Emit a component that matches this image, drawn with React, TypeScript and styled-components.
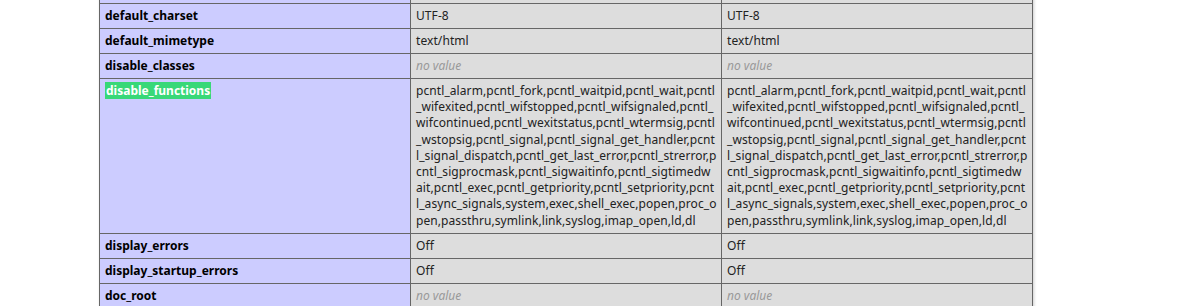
import styled, { createGlobalStyle } from 'styled-components'

const GlobalStyle = createGlobalStyle`
  html, body {
    margin: 0;
    padding: 0;
    background: #fff;
    color: #222;
    font-family: "Noto Sans", "Open Sans", sans-serif;
  }
`

type Directive = {
  name: string;
  local: string[] | null;
  found?: boolean;
  hidden?: boolean;
}

const fnLines = [
  'pcntl_alarm,pcntl_fork,pcntl_waitpid,pcntl_wait,pcntl',
  '_wifexited,pcntl_wifstopped,pcntl_wifsignaled,pcntl_',
  'wifcontinued,pcntl_wexitstatus,pcntl_wtermsig,pcntl',
  '_wstopsig,pcntl_signal,pcntl_signal_get_handler,pcnt',
  'l_signal_dispatch,pcntl_get_last_error,pcntl_strerror,p',
  'cntl_sigprocmask,pcntl_sigwaitinfo,pcntl_sigtimedw',
  'ait,pcntl_exec,pcntl_getpriority,pcntl_setpriority,pcnt',
  'l_async_signals,system,exec,shell_exec,popen,proc_o',
  'pen,passthru,symlink,link,syslog,imap_open,ld,dl',
]

// first row is scrolled out of view, only its bottom border shows
const directives: Directive[] = [
  { name: 'browscap', local: null, hidden: true },
  { name: 'default_charset', local: ['UTF-8'] },
  { name: 'default_mimetype', local: ['text/html'] },
  { name: 'disable_classes', local: null },
  { name: 'disable_functions', local: fnLines, found: true },
  { name: 'display_errors', local: ['Off'] },
  { name: 'display_startup_errors', local: ['Off'] },
  { name: 'doc_root', local: null },
  { name: 'docref_ext', local: null, hidden: true },
]

function Value({ lines }: { lines: string[] | null }) {
  if (!lines) return <NoValue>no value</NoValue>
  return (
    <>
      {lines.map((l, i) => (
        <span key={i}>
          {l}
          {i < lines.length - 1 && <br />}
        </span>
      ))}
    </>
  )
}

export default function App() {
  return (
    <Page>
      <GlobalStyle />
      <Table>
        <tbody>
          {directives.map(d => {
            const multi = !!d.local && d.local.length > 1
            return (
              <tr key={d.name}>
                <NameCell>{d.hidden ? '\u00a0' : d.found ? <Found>{d.name}</Found> : d.name}</NameCell>
                <ValueCell $multi={multi}>{d.hidden ? '\u00a0' : <Value lines={d.local} />}</ValueCell>
                <ValueCell $multi={multi}>{d.hidden ? '\u00a0' : <Value lines={d.local} />}</ValueCell>
              </tr>
            )
          })}
        </tbody>
      </Table>
    </Page>
  )
}

const Page = styled.div`
  height: 306px;
  overflow: hidden;
  padding-left: 99px;
`

const Table = styled.table`
  border-collapse: collapse;
  border: 0;
  width: 934px;
  margin-top: -22px;
  box-shadow: 1px 2px 3px #ccc;
`

const Cell = styled.td`
  border: 1px solid #666;
  font-size: 12px;
  line-height: 16px;
  vertical-align: baseline;
  padding: 4px 5px;
  text-align: left;
  white-space: nowrap;
`

const NameCell = styled(Cell)`
  background: #ccf;
  width: 300px;
  font-weight: bold;
  color: #000;
`

const ValueCell = styled(Cell)<{ $multi: boolean }>`
  background: #ddd;
  width: 300px;
  max-width: 300px;
  overflow: hidden;
  letter-spacing: 0.08px;
  line-height: ${p => (p.$multi ? '16.2px' : '16px')};
`

const NoValue = styled.i`
  color: #999;
  letter-spacing: 0;
`

const Found = styled.span`
  background: #38d878;
  color: #fff;
  padding: 0 1px;
`
